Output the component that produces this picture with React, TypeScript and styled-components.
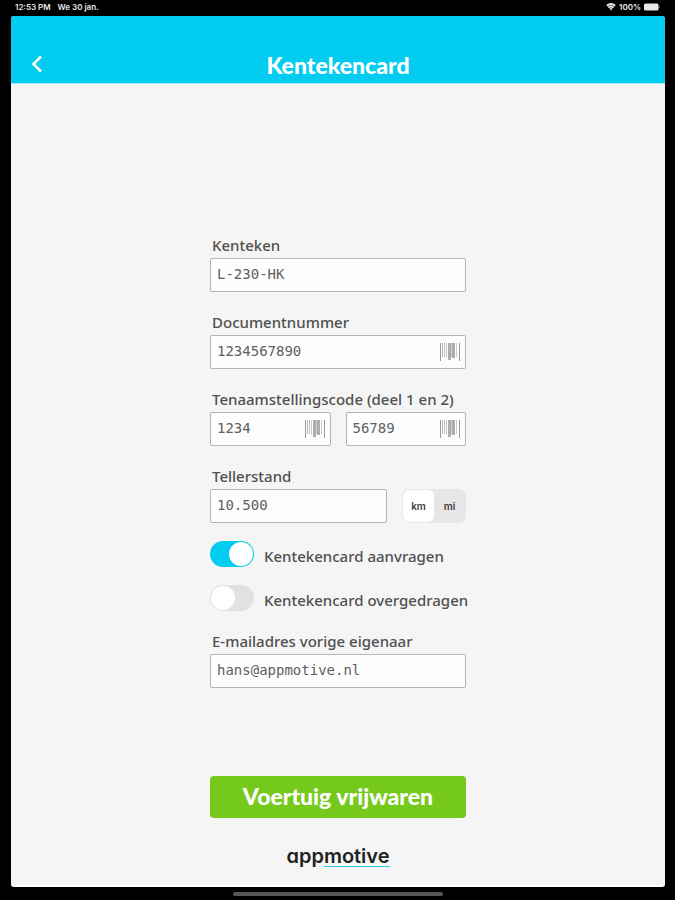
import React, { useState } from "react";
import styled, { createGlobalStyle } from "styled-components";

const GlobalStyle = createGlobalStyle`
  *, *::before, *::after { box-sizing: border-box; }
  body { margin: 0; background: #000; }
  button, input { font: inherit; margin: 0; }
`;

const Device = styled.div`
  min-height: 100vh;
  display: flex;
  flex-direction: column;
  padding: 0 10px 0 11px;
  background: #000;
  color: #505050;
  font-family: "Noto Sans", Lato, sans-serif;
`;

const StatusBar = styled.div`
  height: 16px;
  display: flex;
  align-items: center;
  justify-content: space-between;
  padding: 0 4px 2px;
  color: #e8e8e8;
  font: 600 8px/12px Inter, sans-serif;
`;

const StatusGroup = styled.div<{ $gap: number }>`
  display: flex;
  align-items: center;
  gap: ${(p) => p.$gap}px;
`;

const Screen = styled.div`
  flex: 1;
  display: flex;
  flex-direction: column;
  border-radius: 3px;
  overflow: hidden;
  background: #f5f5f5;
  border-bottom: 2px solid #fff;
`;

const Header = styled.header`
  display: grid;
  grid-template-columns: 48px 1fr 48px;
  align-items: center;
  padding: 28px 2px 0;
  height: 68px;
  background: #02cdf0;
  border-bottom: 1px solid #9be8f6;
  color: #fff;
`;

const BackButton = styled.button`
  display: flex;
  justify-content: center;
  padding: 4px;
  border: 0;
  background: none;
  color: inherit;
`;

const Title = styled.h1`
  margin: 2px 0 0;
  text-align: center;
  font: 900 23px/32px Lato, sans-serif;
`;

const Content = styled.main`
  flex: 1;
  display: flex;
  flex-direction: column;
  align-items: center;
  padding: 151px 16px 12px;
`;

const Form = styled.form`
  width: 100%;
  max-width: 256px;
  display: flex;
  flex-direction: column;
  gap: 20px;
`;

const Field = styled.div`
  display: flex;
  flex-direction: column;
  gap: 3px;
`;

const Label = styled.label`
  padding-left: 2px;
  font-size: 15px;
  line-height: 20px;
  font-weight: 500;
  white-space: nowrap;
`;

const SwitchLabel = styled(Label)`
  padding-top: 3px;
`;

const Row = styled.div`
  display: flex;
  gap: 15px;
`;

const Box = styled.div`
  flex: 1 0 34px;
  min-width: 0;
  height: 34px;
  display: flex;
  align-items: center;
  padding: 0 5px 0 6px;
  border: 1px solid #b4b4b4;
  border-radius: 2px;
  background: #fdfdfd;
`;

const TextInput = styled.input`
  flex: 1;
  min-width: 0;
  width: 100%;
  padding: 0 0 2px;
  border: 0;
  outline: 0;
  background: none;
  color: #606060;
  font: 14px/20px "DejaVu Sans Mono", "Liberation Mono", monospace;
`;

const ScanButton = styled.button`
  display: flex;
  padding: 0;
  border: 0;
  background: none;
  color: #999;
`;

const Segments = styled.div`
  width: 64px;
  display: grid;
  grid-template-columns: 1fr 1fr;
  padding: 1px;
  border-radius: 7px;
  background: #e6e6e6;
`;

const Segment = styled.label`
  display: flex;
  align-items: center;
  justify-content: center;
  border-radius: 6px;
  color: #404040;
  font: 600 10px/16px Inter, sans-serif;
  &:has(input:checked) {
    background: #fff;
  }
`;

const HiddenRadio = styled.input`
  appearance: none;
  width: 0;
  height: 0;
`;

const Switches = styled.div`
  display: flex;
  flex-direction: column;
  gap: 18px;
  margin-top: -2px;
`;

const SwitchRow = styled.div`
  display: flex;
  align-items: center;
  gap: 8px;
`;

const Switch = styled.input`
  appearance: none;
  flex: none;
  display: flex;
  width: 44px;
  height: 26px;
  padding: 1px;
  border-radius: 13px;
  background: #e1e1e1;
  &::before {
    content: "";
    width: 24px;
    height: 24px;
    border-radius: 12px;
    background: #fff;
  }
  &:checked {
    justify-content: flex-end;
    background: #02cdf0;
  }
`;

const Submit = styled.button`
  height: 42px;
  margin-top: 68px;
  padding: 0 0 2px;
  border: 0;
  border-radius: 4px;
  background: #75c91a;
  color: #fff;
  font: 900 23px/28px Lato, sans-serif;
`;

const Logo = styled.footer`
  margin-top: 28px;
  color: #222;
  font: 600 20px/20px Inter, sans-serif;
  font-feature-settings: "cv11";
`;

const LogoAccent = styled.span`
  display: inline-block;
  border-bottom: 1px solid #35c9e3;
`;

const HomeArea = styled.div`
  height: 13px;
  display: flex;
  justify-content: center;
  align-items: center;
`;

const HomeBar = styled.div`
  width: 32%;
  height: 4px;
  border-radius: 2px;
  background: #555;
`;

const bars: [number, number, number, number][] = [
  [0, 1, 18, 1],
  [2, 1, 14, 0.7],
  [4, 1, 14, 0.6],
  [6, 1, 15, 0.5],
  [8, 3, 17, 0.8],
  [11, 1, 14, 0.5],
  [12, 3, 15, 0.8],
  [16, 1, 14, 0.5],
  [19, 1, 18, 1],
];

function Barcode() {
  return (
    <svg width="20" height="18" viewBox="0 0 20 18" fill="currentColor" aria-hidden="true">
      {bars.map(([x, w, h, o]) => (
        <rect key={x} x={x} y="0" width={w} height={h} opacity={o} />
      ))}
    </svg>
  );
}

function Wifi() {
  return (
    <svg width="10" height="8" viewBox="0 0 10 8" fill="none" stroke="currentColor" aria-hidden="true">
      <path d="M.8 2.8Q5-.8 9.2 2.8" strokeWidth="1.8" />
      <path d="M2.4 4.6Q5 2.4 7.6 4.6" strokeWidth="1.8" />
      <path d="M3.4 5.6Q5 4.5 6.6 5.6L5 7.6Z" fill="currentColor" stroke="none" />
    </svg>
  );
}

function Battery() {
  return (
    <svg width="17" height="8" viewBox="0 0 17 8" fill="currentColor" aria-hidden="true">
      <rect x="0" y="0.5" width="14.5" height="7" rx="1.6" />
      <path d="M15.2 2.8Q16.6 4 15.2 5.2Z" />
    </svg>
  );
}

interface CodeBoxProps {
  id: string;
  value: string;
  scan?: boolean;
  label?: string;
  type?: string;
}

function CodeBox({ id, value, scan, label, type = "text" }: CodeBoxProps) {
  return (
    <Box>
      <TextInput id={id} type={type} defaultValue={value} aria-label={label} />
      {scan && (
        <ScanButton type="button" aria-label="Scan barcode">
          <Barcode />
        </ScanButton>
      )}
    </Box>
  );
}

export default function App() {
  const [unit, setUnit] = useState("km");
  return (
    <Device>
      <GlobalStyle />
      <StatusBar>
        <StatusGroup $gap={7}>
          <span>12:53 PM</span>
          <span>We 30 jan.</span>
        </StatusGroup>
        <StatusGroup $gap={3}>
          <Wifi />
          <span>100%</span>
          <Battery />
        </StatusGroup>
      </StatusBar>
      <Screen>
        <Header>
          <BackButton type="button" aria-label="Terug">
            <svg width="12" height="18" viewBox="0 0 12 18" fill="none" stroke="currentColor" strokeWidth="2.6" aria-hidden="true">
              <path d="M10 1.5 2.5 9 10 16.5" />
            </svg>
          </BackButton>
          <Title>Kentekencard</Title>
        </Header>
        <Content>
          <Form onSubmit={(e) => e.preventDefault()}>
            <Field>
              <Label htmlFor="plate">Kenteken</Label>
              <CodeBox id="plate" value="L-230-HK" />
            </Field>
            <Field>
              <Label htmlFor="document">Documentnummer</Label>
              <CodeBox id="document" value="1234567890" scan />
            </Field>
            <Field>
              <Label htmlFor="code1">Tenaamstellingscode (deel 1 en 2)</Label>
              <Row>
                <CodeBox id="code1" value="1234" scan />
                <CodeBox id="code2" value="56789" scan label="Tenaamstellingscode deel 2" />
              </Row>
            </Field>
            <Field>
              <Label htmlFor="mileage">Tellerstand</Label>
              <Row>
                <CodeBox id="mileage" value="10.500" />
                <Segments role="radiogroup" aria-label="Eenheid">
                  {["km", "mi"].map((u) => (
                    <Segment key={u}>
                      <HiddenRadio type="radio" name="unit" checked={unit === u} onChange={() => setUnit(u)} />
                      {u}
                    </Segment>
                  ))}
                </Segments>
              </Row>
            </Field>
            <Switches>
              <SwitchRow>
                <Switch type="checkbox" role="switch" id="request" defaultChecked />
                <SwitchLabel htmlFor="request">Kentekencard aanvragen</SwitchLabel>
              </SwitchRow>
              <SwitchRow>
                <Switch type="checkbox" role="switch" id="handed" />
                <SwitchLabel htmlFor="handed">Kentekencard overgedragen</SwitchLabel>
              </SwitchRow>
            </Switches>
            <Field>
              <Label htmlFor="email">E-mailadres vorige eigenaar</Label>
              <CodeBox id="email" type="email" value="hans@appmotive.nl" />
            </Field>
            <Submit type="submit">Voertuig vrijwaren</Submit>
          </Form>
          <Logo>
            app<LogoAccent>motive</LogoAccent>
          </Logo>
        </Content>
      </Screen>
      <HomeArea>
        <HomeBar />
      </HomeArea>
    </Device>
  );
}
